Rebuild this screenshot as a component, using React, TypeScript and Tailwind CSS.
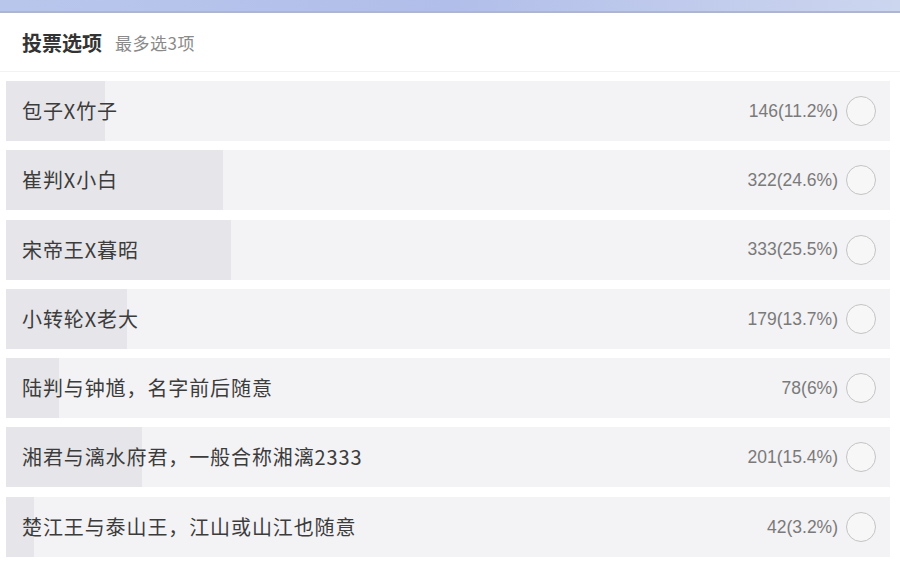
import React from "react";

type Option = { label: string; votes: number; pct: number };

const options: Option[] = [
  { label: "包子X竹子", votes: 146, pct: 11.2 },
  { label: "崔判X小白", votes: 322, pct: 24.6 },
  { label: "宋帝王X暮昭", votes: 333, pct: 25.5 },
  { label: "小转轮X老大", votes: 179, pct: 13.7 },
  { label: "陆判与钟馗，名字前后随意", votes: 78, pct: 6 },
  { label: "湘君与漓水府君，一般合称湘漓2333", votes: 201, pct: 15.4 },
  { label: "楚江王与泰山王，江山或山江也随意", votes: 42, pct: 3.2 },
];

const font = {
  fontFamily: '"Noto Sans CJK SC", "Noto Sans", sans-serif',
};

function OptionRow({ option }: { option: Option }) {
  return (
    <div className="relative flex h-[60px] items-center bg-[#f3f2f5]">
      <div
        className="absolute left-0 top-0 h-full bg-[#e6e5e9]"
        style={{ width: `${option.pct}%` }}
      />
      <span className="relative ml-[16px] flex-1 text-[20px] tracking-[0.9px] text-[#3c3c3c]">
        {option.label}
      </span>
      <span
        className="relative text-[17.5px] text-[#7a7a7a]"
        style={{ fontFamily: '"Liberation Sans", Arial, sans-serif' }}
      >
        {option.votes}({option.pct}%)
      </span>
      <span className="relative ml-[8px] mr-[14px] h-[30px] w-[30px] rounded-full border-[1.5px] border-[#c4c4c4] bg-[#f7f7f8]" />
    </div>
  );
}

export default function App() {
  return (
    <div className="h-[562px] w-[900px] overflow-hidden bg-white" style={font}>
      <div className="h-[11px] bg-gradient-to-r from-[#b9c6ec] via-[#b1bee9] to-[#cdd6ef]" />
      <div className="h-[2px] bg-[#aeb5cc]" />
      <div className="flex h-[59px] items-center border-b border-[#f2f2f2] pl-[22px] pt-[2px]">
        <span className="text-[20px] font-bold text-[#333]">投票选项</span>
        <span className="ml-[13px] text-[17px] tracking-[0.5px] text-[#8a8a8a]">最多选3项</span>
      </div>
      <div className="flex flex-col gap-[9.3px] px-[6px] pr-[10px] pt-[9px]">
        {options.map((o) => (
          <OptionRow key={o.label} option={o} />
        ))}
      </div>
    </div>
  );
}
